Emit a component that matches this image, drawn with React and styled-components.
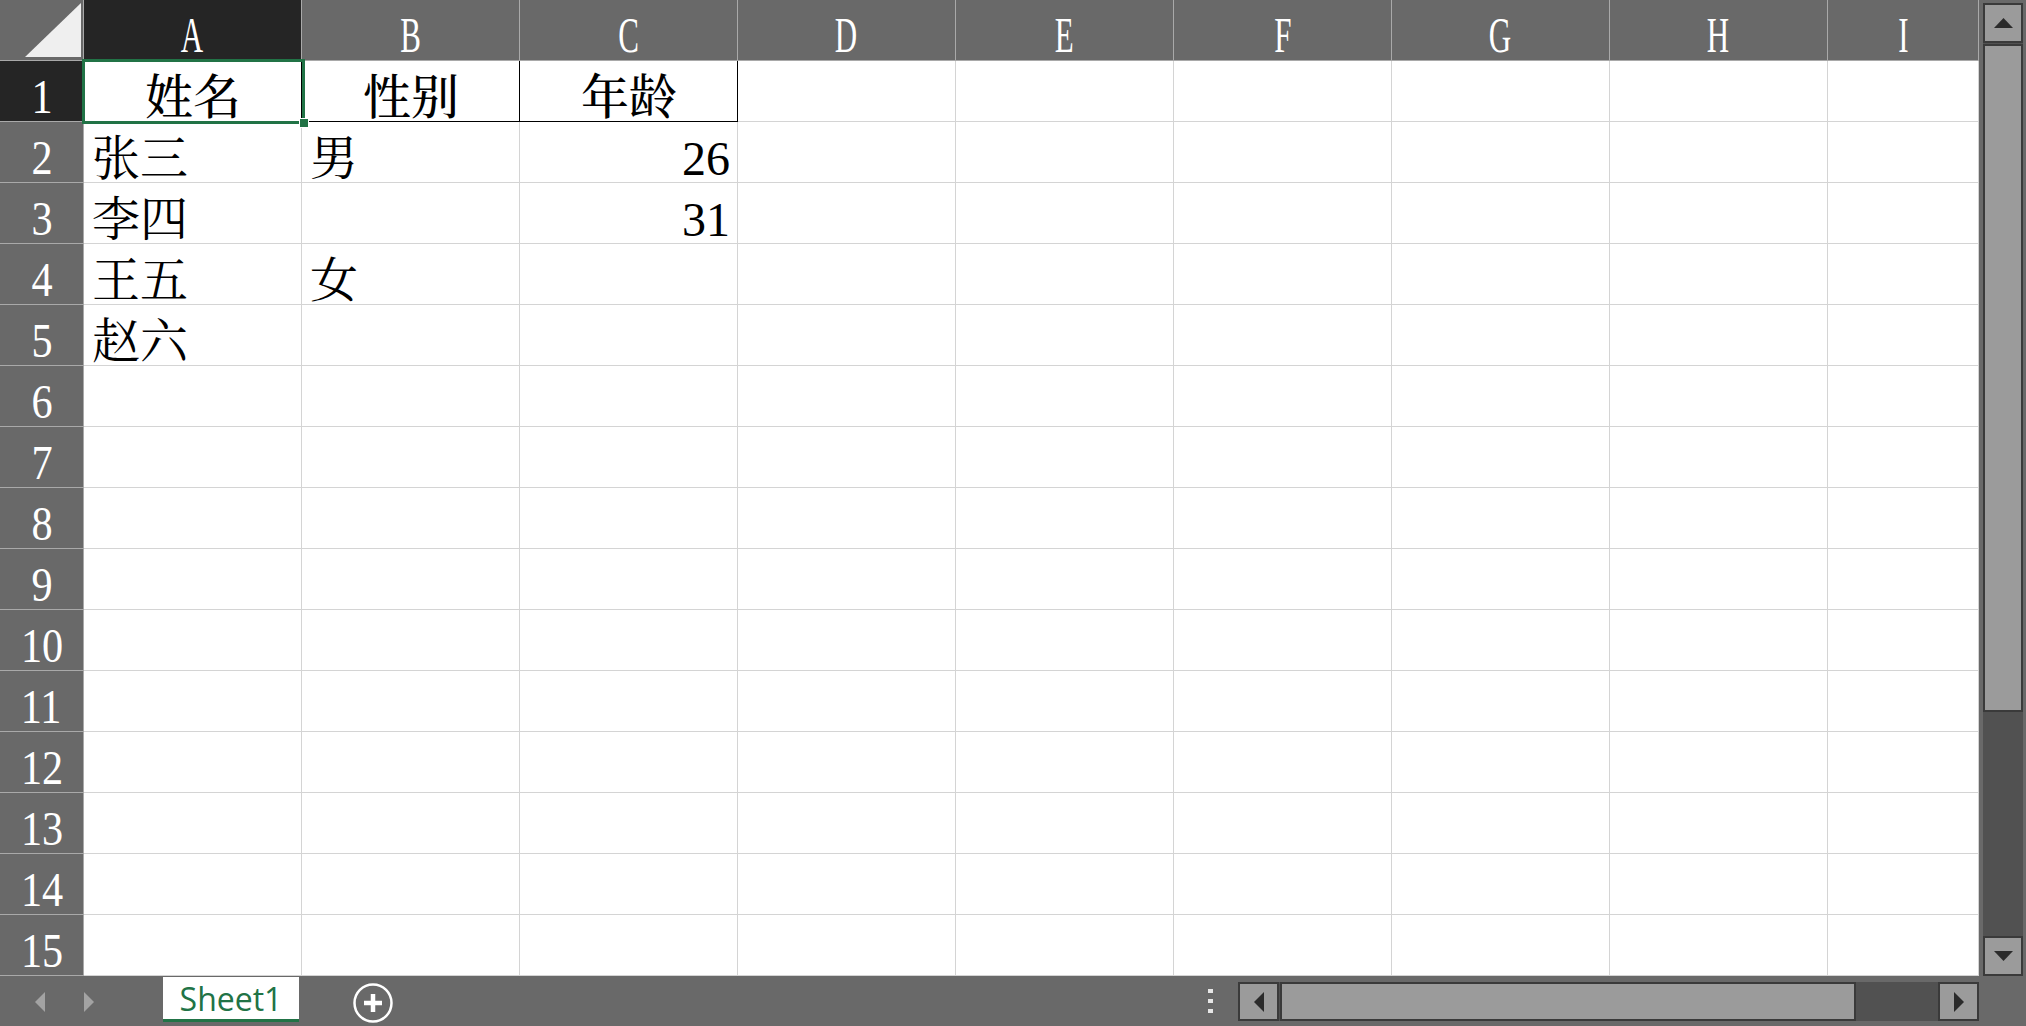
import React from "react";
import styled, { createGlobalStyle, css } from "styled-components";

const GREEN = "#217346";
const HEAD_BG = "#696969";
const HEAD_SEL = "#252525";
const HEAD_LINE = "#a9a9a9";
const GRID_LINE = "#d4d4d4";
const BTN_BG = "#9b9b9b";
const BTN_BORDER = "#3a3a3a";
const TRACK = "#515151";

const COLS = ["A", "B", "C", "D", "E", "F", "G", "H", "I"];
const ROWS = Array.from({ length: 15 }, (_, i) => i + 1);
const DATA = {
  1: { A: "姓名", B: "性别", C: "年龄" },
  2: { A: "张三", B: "男", C: 26 },
  3: { A: "李四", C: 31 },
  4: { A: "王五", B: "女" },
  5: { A: "赵六" },
};

const Global = createGlobalStyle`
  html, body { margin: 0; padding: 0; width: 2026px; height: 1026px; overflow: hidden; background: ${HEAD_BG}; }
  #root { width: 2026px; height: 1026px; }
  * { box-sizing: border-box; }
`;

const Page = styled.div`
  display: grid;
  grid-template-columns: 1979px 47px;
  grid-template-rows: 976px 50px;
  width: 2026px;
  height: 1026px;
  background: ${HEAD_BG};
`;

const Sheet = styled.div`
  position: relative;
  display: grid;
  grid-template-columns: 84px repeat(8, 218px) 1fr;
  grid-template-rows: repeat(16, 61px);
  background: #fff;
  overflow: hidden;
`;

const Corner = styled.div`
  background: ${HEAD_BG};
  border-right: 1px solid ${HEAD_LINE};
  border-bottom: 1px solid ${HEAD_LINE};
  display: flex;
  align-items: flex-end;
  justify-content: flex-end;
  padding: 0 2px 3px 0;
`;

const headerText = css`
  font-family: "Liberation Serif", "Times New Roman", serif;
  color: #fff;
`;

const ColHead = styled.div`
  ${headerText};
  background: ${(p) => (p.$selected ? HEAD_SEL : HEAD_BG)};
  border-right: 1px solid ${HEAD_LINE};
  border-bottom: 1px solid ${HEAD_LINE};
  display: flex;
  align-items: center;
  justify-content: center;
  padding-top: 10px;
  font-size: 50px;
  line-height: 1;
`;

const ColLabel = styled.span`
  display: inline-block;
  transform: scaleX(0.62);
`;

const RowHead = styled.div`
  ${headerText};
  background: ${(p) => (p.$selected ? HEAD_SEL : HEAD_BG)};
  border-right: 1px solid ${HEAD_LINE};
  border-bottom: 1px solid ${HEAD_LINE};
  display: flex;
  align-items: center;
  justify-content: center;
  padding-top: 11px;
  font-size: 48px;
  line-height: 1;
`;

const RowLabel = styled.span`
  display: inline-block;
  transform: scaleX(0.88);
`;

const Cell = styled.div`
  font-family: "Liberation Serif", "Noto Serif CJK SC", "Noto Sans CJK SC", serif;
  font-size: 48px;
  line-height: 1;
  color: #000;
  display: flex;
  align-items: center;
  justify-content: ${(p) =>
    p.$align === "right" ? "flex-end" : p.$align === "center" ? "center" : "flex-start"};
  padding: 14px 7px 0 8px;
  white-space: nowrap;
  border-right: 1px solid ${(p) => (p.$boxed ? "#000" : GRID_LINE)};
  border-bottom: 1px solid ${(p) => (p.$boxed ? "#000" : GRID_LINE)};
  font-weight: ${(p) => (p.$title ? 500 : 400)};
`;

const Selection = styled.div`
  position: absolute;
  left: 82px;
  top: 59px;
  width: 223px;
  height: 65px;
  border: 3px solid ${GREEN};
  pointer-events: none;
`;

const Handle = styled.div`
  position: absolute;
  right: -7px;
  bottom: -7px;
  width: 10px;
  height: 10px;
  background: ${GREEN};
  border: 1px solid #fff;
`;

/* vertical scrollbar */
const VScroll = styled.div`
  background: ${HEAD_BG};
  padding: 3px 3px 0 4px;
  display: flex;
`;

const VTrack = styled.div`
  flex: 1;
  background: ${TRACK};
  display: flex;
  flex-direction: column;
`;

const ScrollBtn = styled.div`
  flex: none;
  width: ${(p) => p.$w || "100%"};
  height: ${(p) => p.$h || "100%"};
  background: ${BTN_BG};
  border: 2px solid ${BTN_BORDER};
  display: flex;
  align-items: center;
  justify-content: center;
`;

const VThumb = styled.div`
  flex: none;
  height: 668px;
  margin-top: 1px;
  background: ${BTN_BG};
  border: 2px solid ${BTN_BORDER};
`;

const Fill = styled.div`
  flex: 1;
`;

/* bottom bar */
const BottomBar = styled.div`
  grid-column: 1 / span 2;
  background: ${HEAD_BG};
  display: flex;
  align-items: flex-start;
`;

const NavArea = styled.div`
  width: 163px;
  height: 50px;
  flex: none;
  display: flex;
  align-items: center;
  gap: 39px;
  padding: 1px 0 0 35px;
`;

const Tab = styled.div`
  flex: none;
  width: 136px;
  height: 45px;
  margin-top: 1px;
  background: #fff;
  border-bottom: 3px solid ${GREEN};
  color: ${GREEN};
  font-family: "Segoe UI", "Open Sans", "Noto Sans", sans-serif;
  font-size: 32px;
  line-height: 1;
  display: flex;
  align-items: center;
  justify-content: center;
  padding-top: 2px;
`;

const AddBtn = styled.div`
  flex: none;
  width: 40px;
  height: 40px;
  margin: 7px 0 0 54px;
  display: flex;
`;

const Dots = styled.div`
  flex: none;
  width: 5px;
  margin: 13px 25px 0 0;
  display: flex;
  flex-direction: column;
  gap: 6px;
`;

const Dot = styled.span`
  display: block;
  width: 5px;
  height: 4px;
  background: #e6e6e6;
`;

const HScroll = styled.div`
  flex: none;
  width: 741px;
  height: 39px;
  margin: 6px 47px 0 0;
  background: ${TRACK};
  display: flex;
`;

const HThumb = styled.div`
  flex: none;
  width: 576px;
  margin-left: 1px;
  background: ${BTN_BG};
  border: 2px solid ${BTN_BORDER};
`;

const Arrow = ({ dir, color = "#2b2b2b" }) => {
  const shapes = {
    up: { w: 19, h: 10, pts: "9.5,0 19,10 0,10" },
    down: { w: 19, h: 10, pts: "0,0 19,0 9.5,10" },
    left: { w: 10, h: 20, pts: "10,0 10,20 0,10" },
    right: { w: 10, h: 20, pts: "0,0 10,10 0,20" },
  };
  const s = shapes[dir];
  return (
    <svg width={s.w} height={s.h} viewBox={`0 0 ${s.w} ${s.h}`}>
      <polygon points={s.pts} fill={color} />
    </svg>
  );
};

export default function App() {
  return (
    <>
      <Global />
      <Page>
        <Sheet>
          <Corner>
            <svg width="56" height="54" viewBox="0 0 56 54">
              <polygon points="0,54 56,54 56,0" fill="#efefef" />
            </svg>
          </Corner>
          {COLS.map((c) => (
            <ColHead key={c} $selected={c === "A"}>
              <ColLabel>{c}</ColLabel>
            </ColHead>
          ))}
          {ROWS.map((r) => (
            <React.Fragment key={r}>
              <RowHead $selected={r === 1}>
                <RowLabel>{r}</RowLabel>
              </RowHead>
              {COLS.map((c) => {
                const v = DATA[r] && DATA[r][c];
                const isNum = typeof v === "number";
                const boxed = r === 1 && ["A", "B", "C"].includes(c);
                return (
                  <Cell
                    key={c}
                    $boxed={boxed}
                    $title={r === 1}
                    $align={r === 1 ? "center" : isNum ? "right" : "left"}
                  >
                    {v ?? ""}
                  </Cell>
                );
              })}
            </React.Fragment>
          ))}
          <Selection>
            <Handle />
          </Selection>
        </Sheet>

        <VScroll>
          <VTrack>
            <ScrollBtn $h="40px">
              <Arrow dir="up" />
            </ScrollBtn>
            <VThumb />
            <Fill />
            <ScrollBtn $h="40px">
              <Arrow dir="down" />
            </ScrollBtn>
          </VTrack>
        </VScroll>

        <BottomBar>
          <NavArea>
            <Arrow dir="left" color="#a3a3a3" />
            <Arrow dir="right" color="#a3a3a3" />
          </NavArea>
          <Tab>Sheet1</Tab>
          <AddBtn>
            <svg width="40" height="40" viewBox="0 0 40 40">
              <circle cx="20" cy="20" r="18.5" fill="none" stroke="#fff" strokeWidth="2.5" />
              <path d="M20 11v18M11 20h18" stroke="#fff" strokeWidth="4.5" />
            </svg>
          </AddBtn>
          <Fill />
          <Dots>
            <Dot />
            <Dot />
            <Dot />
          </Dots>
          <HScroll>
            <ScrollBtn $w="41px">
              <Arrow dir="left" />
            </ScrollBtn>
            <HThumb />
            <Fill />
            <ScrollBtn $w="41px">
              <Arrow dir="right" />
            </ScrollBtn>
          </HScroll>
        </BottomBar>
      </Page>
    </>
  );
}
